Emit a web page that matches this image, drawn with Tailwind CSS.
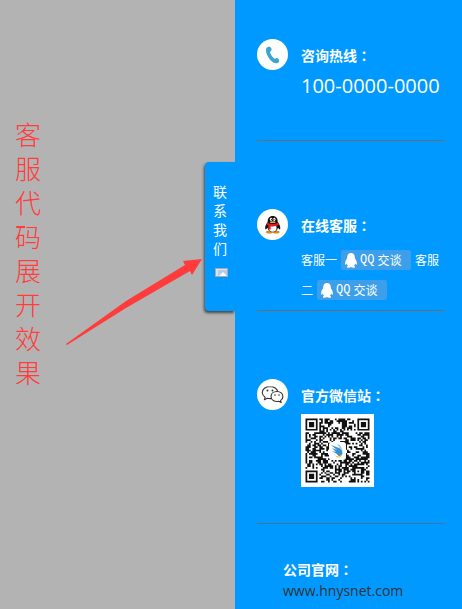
<!DOCTYPE html>
<html lang="zh-CN">
<head>
<meta charset="utf-8">
<meta name="viewport" content="width=device-width, initial-scale=1">
<title>客服代码展开效果</title>
<script src="https://cdn.jsdelivr.net/npm/@tailwindcss/browser@4"></script>
</head>
<body class="relative flex min-h-screen bg-[#b3b3b3] font-['Open_Sans','Noto_Sans_CJK_SC',sans-serif] text-white">
  <main class="flex flex-1 justify-between">
    <h1 class="mt-[117px] ml-[15px] w-[26px] text-[26px] leading-[34px] font-light text-[#ff3b3b] font-['Noto_Sans_CJK_SC',sans-serif]">客服代码展开效果</h1>
    <button type="button" class="mt-[162px] flex h-[149px] w-[30px] flex-col items-center self-start rounded-l-[4px] bg-[#0099ff] pt-5 text-[14px] leading-[19px] shadow-[-1px_2px_3px_#444]">
      <span class="w-[14px] font-['Noto_Sans_CJK_SC',sans-serif]">联系我们</span>
      <svg class="mt-[10px] ml-[3px]" width="13" height="9" viewBox="0 0 13 9" aria-hidden="true"><path fill="#d9e6f8" stroke="#aaa" d="M.5.5h12v8H.5z"/><path fill="#b3cceb" d="M3 2h9v6H3z"/><path fill="#fff" d="M4 8l4-4 4 4z"/></svg>
    </button>
  </main>

  <svg class="absolute top-[258px] left-[66px]" width="137" height="88" viewBox="0 0 137 88" aria-hidden="true"><path fill="#ff3b3b" d="M0 86 60 43 119 7 117 3 136 1 126 17 124 13 60 50 1 87z"/></svg>

  <aside class="relative w-[227px] shrink-0 bg-[#0099ff] pr-[18px] pl-[22px]">
    <section class="flex h-[141px] gap-[13px] border-b border-[#666e78] pt-[39px]">
      <svg class="shrink-0" width="31" height="31" viewBox="0 0 31 31" aria-hidden="true"><circle cx="15.500" cy="15.500" r="15.500" fill="#fff"/><path fill="#3aa6d0" d="M9.200 9.500c1-2 4-2.400 5-.5.600 1.300.5 2.800-.8 3.500-.6.500-.5 1 0 2 1 2.200 2.300 4 4 5 .7.400 1.200.2 1.700-.2 1.300-.9 3.300 1 3 2.700-.2 1.800-1.500 2.400-3 2.200-3.700-.4-6.700-3.700-8.400-7.200C9.500 14.700 8.400 11.500 9.200 9.500z"/></svg>
      <div class="whitespace-nowrap">
        <h2 class="pt-[5px] text-[14px] leading-[22px] font-bold font-['Noto_Sans_CJK_SC',sans-serif]">咨询热线<span class="font-['Noto_Sans_CJK_TC',sans-serif]" lang="zh-TW">：</span></h2>
        <p class="mt-[6px] text-[20px] leading-[28px]">100-0000-0000</p>
      </div>
    </section>

    <section class="flex h-[170px] gap-[13px] border-b border-[#666e78] pt-[68px]">
      <svg class="shrink-0" width="31" height="31" viewBox="0 0 31 31" aria-hidden="true"><circle cx="15.500" cy="15.500" r="15.500" fill="#fff"/><ellipse cx="12.500" cy="23" rx="3.500" ry="1.500" fill="#d98a1c"/><ellipse cx="19" cy="23" rx="3.500" ry="1.500" fill="#d98a1c"/><path fill="#111" d="M15.700 7c-3.400 0-5.200 2.500-5 6-1.500 2-3 4-2.500 7 .7.600 1.500-.2 2.200-1.300.8 2.700 2.600 4.300 5.300 4.300s4.600-1.600 5.300-4.300c.7 1.100 1.600 1.900 2.200 1.300.5-3-1-5-2.500-7 .2-3.500-1.600-6-5-6z"/><ellipse cx="15.700" cy="19" rx="3.900" ry="3.700" fill="#fff"/><path fill="#e31b23" d="M10.200 13.500c3.500 2 7.500 2 11 0l.8 2c-3 2-6 2.200-8.300 1.700v3.300h-2.400v-4l-1.600-1z"/><ellipse cx="14.100" cy="10.300" rx="1.200" ry="1.600" fill="#fff"/><ellipse cx="17.300" cy="10.300" rx="1.200" ry="1.600" fill="#fff"/><circle cx="14.500" cy="10.500" r=".6"/><circle cx="16.900" cy="10.500" r=".6"/><ellipse cx="15.700" cy="13.200" rx="3" ry=".9" fill="#f2a71d"/></svg>
      <div>
        <h2 class="pt-[5px] text-[14px] leading-[22px] font-bold whitespace-nowrap font-['Noto_Sans_CJK_SC',sans-serif]">在线客服<span class="font-['Noto_Sans_CJK_TC',sans-serif]" lang="zh-TW">：</span></h2>
        <div class="mt-[9px] flex flex-wrap items-center gap-x-1 text-[12px] leading-[30px] font-['Noto_Sans_CJK_SC',sans-serif]">
          <span>客服一</span>
          <a href="#" class="my-[5px] flex h-5 w-[70px] items-center gap-[3px] rounded-[2px] bg-[#3d9fe9] pl-1 leading-5 whitespace-nowrap"><svg width="12" height="15" viewBox="0 0 12 15" aria-hidden="true"><path fill="#fff" d="M6 0C3.300 0 2 2 2.200 5 1 6.800-.3 9 .2 11.500c.5.500 1.200-.2 1.600-1 .2 1 .6 1.700 1.200 2.300-1.600.6-1.300 2 .2 2 1.200.1 2.200-.2 2.800-.7.600.5 1.600.8 2.800.7 1.500 0 1.800-1.400.2-2 .6-.6 1-1.300 1.200-2.300.4.800 1.100 1.500 1.600 1 .5-2.500-.8-4.700-2-6.500C10 2 8.700 0 6 0z"/></svg><span class="font-['Liberation_Mono',monospace]">QQ</span><span>交谈</span></a>
          <span>客服</span>
          <span>二</span>
          <a href="#" class="my-[5px] flex h-5 w-[70px] items-center gap-[3px] rounded-[2px] bg-[#3d9fe9] pl-1 leading-5 whitespace-nowrap"><svg width="12" height="15" viewBox="0 0 12 15" aria-hidden="true"><path fill="#fff" d="M6 0C3.300 0 2 2 2.200 5 1 6.800-.3 9 .2 11.500c.5.500 1.200-.2 1.600-1 .2 1 .6 1.700 1.200 2.300-1.600.6-1.300 2 .2 2 1.200.1 2.200-.2 2.800-.7.600.5 1.600.8 2.800.7 1.500 0 1.800-1.400.2-2 .6-.6 1-1.300 1.200-2.300.4.800 1.100 1.500 1.600 1 .5-2.500-.8-4.700-2-6.500C10 2 8.700 0 6 0z"/></svg><span class="font-['Liberation_Mono',monospace]">QQ</span><span>交谈</span></a>
        </div>
      </div>
    </section>

    <section class="flex h-[213px] gap-[13px] border-b border-[#3f77a3] pt-[68px]">
      <svg class="shrink-0" width="31" height="31" viewBox="0 0 31 31" aria-hidden="true"><circle cx="15.500" cy="15.500" r="15.500" fill="#fff"/><g fill="#fff" stroke="#333" stroke-width="1.100" stroke-linejoin="round"><path d="M13 7.500c-4.500 0-7.700 2.600-7.700 6 0 2 1 3.600 2.800 4.800l-.8 2.500 3-1.600c5.500 1.400 10.500-1.400 10.500-5.700 0-3.400-3.400-6-7.800-6z"/><path d="M20 12.500c-3.500 0-6 2.200-6 5 0 3.500 3.700 5.700 7.600 4.800l2.600 1.300-.6-2.200c1.500-1 2.300-2.300 2.300-3.900 0-2.800-2.500-5-5.900-5z"/></g><g fill="#333"><circle cx="10.500" cy="11.500" r="1"/><circle cx="15.500" cy="11.500" r="1"/><circle cx="18" cy="16" r=".8"/><circle cx="22" cy="16" r=".8"/></g></svg>
      <div>
        <h2 class="pt-[5px] text-[14px] leading-[22px] font-bold whitespace-nowrap font-['Noto_Sans_CJK_SC',sans-serif]">官方微信站<span class="font-['Noto_Sans_CJK_TC',sans-serif]" lang="zh-TW">：</span></h2>
        <svg class="mt-[8px] bg-white" width="73" height="73" viewBox="0 0 73 73" role="img" aria-label="官方微信二维码">
          <g transform="translate(4.500 4.500) scale(1.730)"><path id="modules" fill="#111"/></g>
          <rect x="28" y="28" width="17" height="18" rx="3" fill="#fff"/>
          <path fill="#3b8fd0" d="M30 31l8 3c3 1 4 4 3 7-2 2-4 1-5-1l-5-3 4 1-4-4 5 2z"/><path fill="#9ccbed" d="M36 30l3 1 3 6-2-1z"/><path fill="#f4c430" d="M34 41c2 2 5 2 7-1 0 4-5 5-7 1z"/>
        </svg>
      </div>
    </section>

    <footer class="pt-[34px] pl-[26px] whitespace-nowrap">
      <h2 class="text-[14px] leading-[22px] font-bold font-['Noto_Sans_CJK_SC',sans-serif]">公司官网<span class="font-['Noto_Sans_CJK_TC',sans-serif]" lang="zh-TW">：</span></h2>
      <a href="#" class="block text-[14px] leading-[22px] text-[#333]">www.hnysnet.com</a>
    </footer>
  </aside>

  <script>
    // Fills the 37-module code grid: data cells, timing rows, finder and alignment squares.
    const N = 37;
    let seed = 20177, d = '';
    const rnd = () => (seed = (seed * 1103515245 + 12345) % 2147483648) / 2147483648;
    const ring = (x, y, cx, cy) => Math.max(Math.abs(x - cx), Math.abs(y - cy));
    for (let y = 0; y < N; y++) for (let x = 0; x < N; x++) {
      let on = rnd() < 0.52;
      if (x === 6 || y === 6) on = (x + y) % 2 === 0;
      const a = ring(x, y, 30, 30);
      if (a < 3) on = a !== 1;
      for (const [cx, cy] of [[3, 3], [33, 3], [3, 33]]) {
        const r = ring(x, y, cx, cy);
        if (r < 5) on = r < 2 || r === 3;
      }
      if (on) d += `M${x} ${y}h1v1h-1z`;
    }
    document.getElementById('modules').setAttribute('d', d);
  </script>
</body>
</html>
